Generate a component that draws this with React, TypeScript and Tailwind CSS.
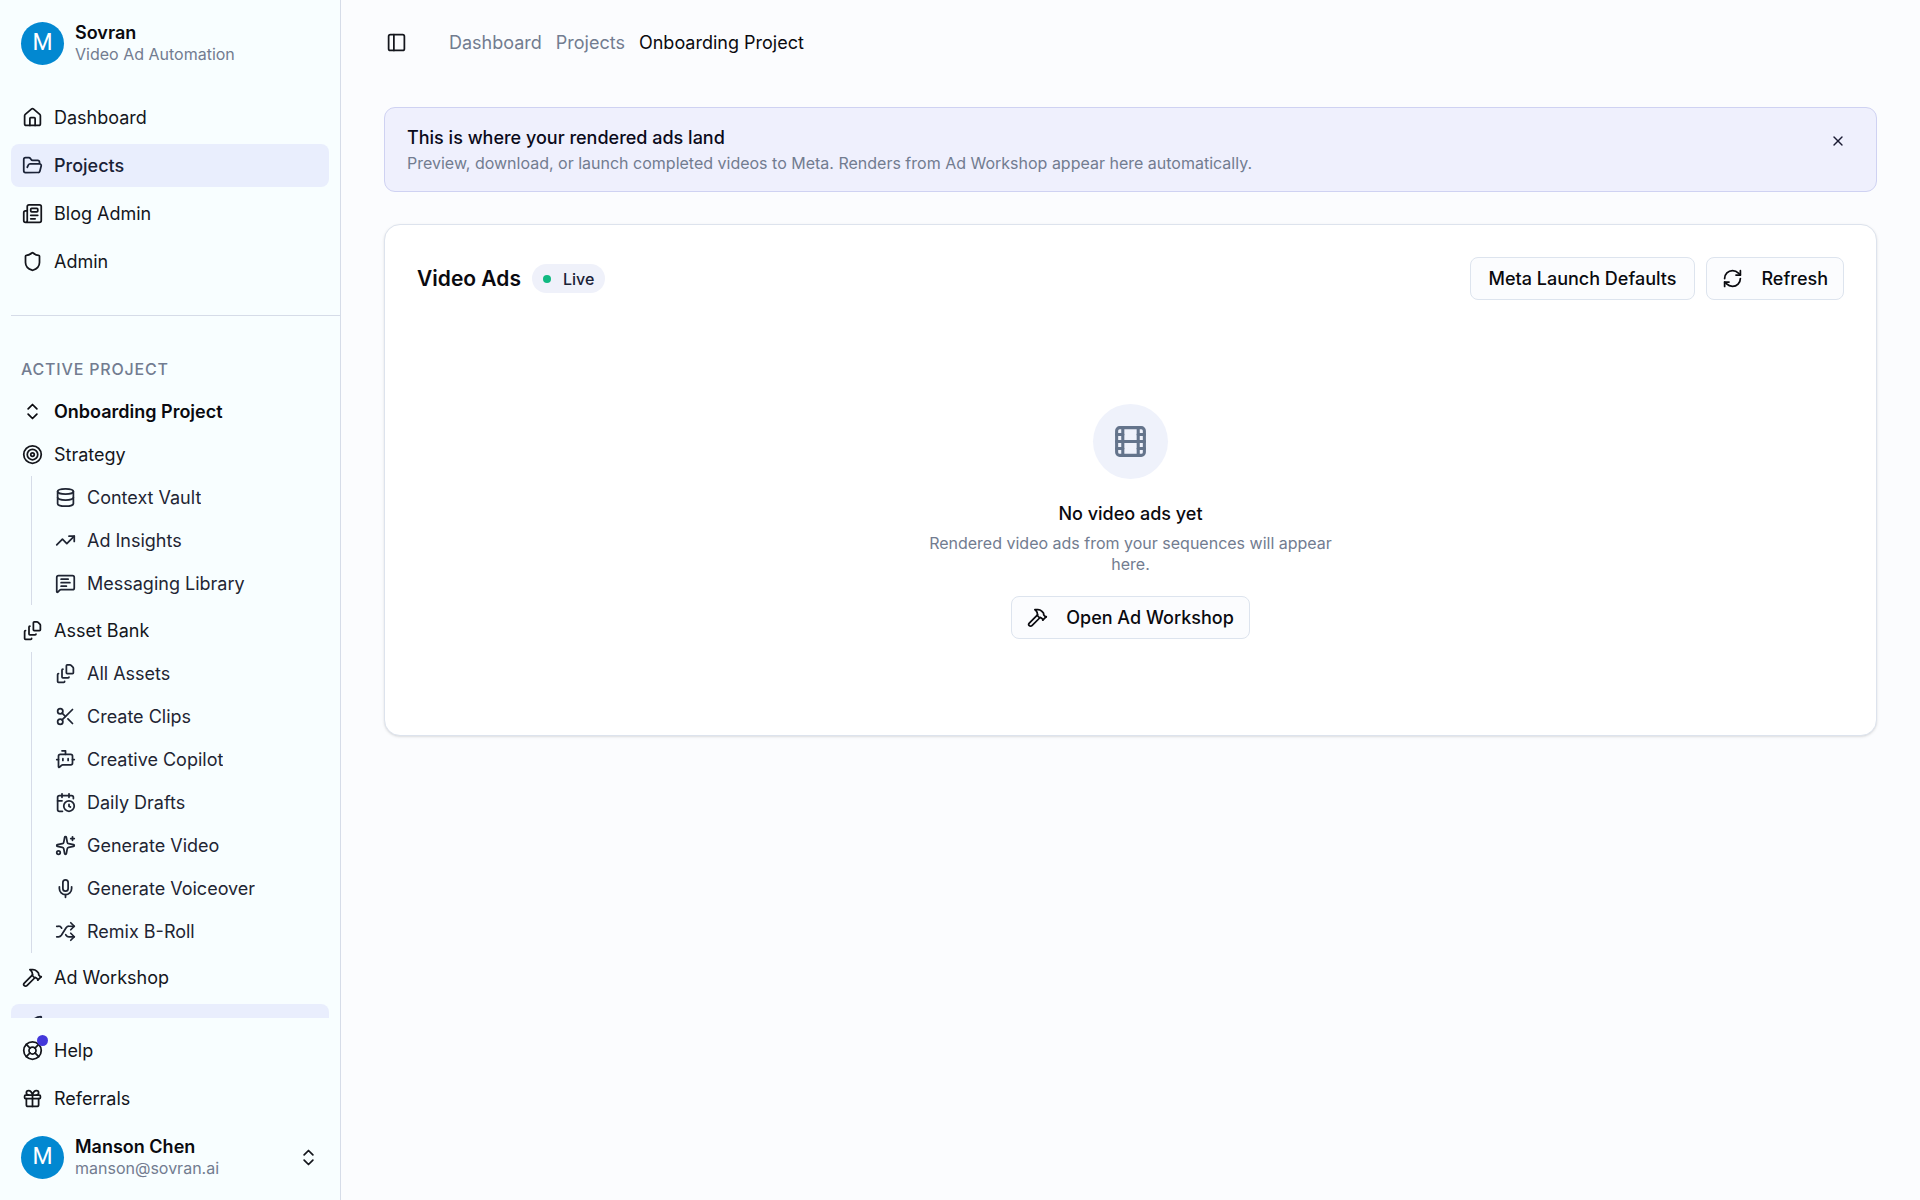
import type { ReactNode } from "react";
import {
  BotMessageSquare,
  CalendarClock,
  ChevronsUpDown,
  Database,
  FileStack,
  Film,
  FolderOpen,
  Gift,
  Hammer,
  House,
  LifeBuoy,
  MessageSquareText,
  Mic,
  Newspaper,
  PanelLeft,
  RefreshCw,
  Rocket,
  Scissors,
  Shield,
  Shuffle,
  Sparkles,
  Target,
  TrendingUp,
  X,
  type LucideIcon,
} from "lucide-react";

type Item = { label: string; icon: LucideIcon; active?: boolean };

const mainNav: Item[] = [
  { label: "Dashboard", icon: House },
  { label: "Projects", icon: FolderOpen, active: true },
  { label: "Blog Admin", icon: Newspaper },
  { label: "Admin", icon: Shield },
];

const strategy: Item[] = [
  { label: "Context Vault", icon: Database },
  { label: "Ad Insights", icon: TrendingUp },
  { label: "Messaging Library", icon: MessageSquareText },
];

const assets: Item[] = [
  { label: "All Assets", icon: FileStack },
  { label: "Create Clips", icon: Scissors },
  { label: "Creative Copilot", icon: BotMessageSquare },
  { label: "Daily Drafts", icon: CalendarClock },
  { label: "Generate Video", icon: Sparkles },
  { label: "Generate Voiceover", icon: Mic },
  { label: "Remix B-Roll", icon: Shuffle },
];

function NavLink({ item, children }: { item: Item; children?: ReactNode }) {
  const Icon = item.icon;
  return (
    <a
      href="#"
      className={
        item.active
          ? "flex h-[43px] items-center gap-[11px] rounded-lg bg-[#e9eefd] px-[11px] font-medium text-[#1a2236]"
          : "flex h-[43px] items-center gap-[11px] rounded-lg px-[11px]"
      }
    >
      <span className="relative shrink-0">
        <Icon size={21} />
        {children}
      </span>
      <span className="truncate">{item.label}</span>
    </a>
  );
}

function SubNav({ items }: { items: Item[] }) {
  return (
    <ul className="ml-5 border-l border-[#d6dce8] pl-3 text-[#1f2533]">
      {items.map((item) => (
        <li key={item.label}>
          <NavLink item={item} />
        </li>
      ))}
    </ul>
  );
}

function Avatar() {
  return (
    <span className="flex size-[43px] shrink-0 items-center justify-center rounded-full bg-[#0288d1] font-['Roboto',sans-serif] text-[23px] text-white">
      M
    </span>
  );
}

function Identity({ name, detail }: { name: string; detail: string }) {
  return (
    <span className="flex min-w-0 flex-1 flex-col text-left">
      <span className="truncate leading-[23px] font-semibold text-[#0a0a0f]">{name}</span>
      <span className="truncate text-base leading-[21px] text-[#727c90]">{detail}</span>
    </span>
  );
}

function OutlineButton({ icon: Icon, children }: { icon?: LucideIcon; children: ReactNode }) {
  return (
    <button
      type="button"
      className={
        Icon
          ? "flex h-[43px] items-center gap-[18px] rounded-lg border border-[#dde4ee] bg-[#fbfcfe] px-[15px] font-medium text-[#0a0a0f]"
          : "flex h-[43px] items-center rounded-lg border border-[#dde4ee] bg-[#fbfcfe] px-[18px] font-medium text-[#0a0a0f]"
      }
    >
      {Icon && <Icon size={21} />}
      {children}
    </button>
  );
}

export default function App() {
  return (
    <div className="flex h-screen bg-[#fbfcfe] font-['Inter',sans-serif] text-[18px] text-[#14161c]">
      <aside className="flex w-[341px] shrink-0 flex-col border-r border-[#d6dce8] bg-[#f8feff]">
        <div className="flex items-center gap-[11px] px-[21px] pt-[21px] pb-[31px]">
          <Avatar />
          <Identity name="Sovran" detail="Video Ad Automation" />
        </div>
        <div className="min-h-0 flex-1 overflow-hidden">
          <nav aria-label="Main" className="px-[11px]">
            <ul className="flex flex-col gap-[5px]">
              {mainNav.map((item) => (
                <li key={item.label}>
                  <NavLink item={item} />
                </li>
              ))}
            </ul>
          </nav>
          <hr className="mt-8 ml-[11px] border-[#d6dce8]" />
          <nav aria-label="Active project" className="px-[11px] pt-[31px]">
            <h2 className="flex h-[43px] items-center px-[10px] text-base font-medium tracking-wider text-[#727c90] uppercase">
              Active Project
            </h2>
            <button type="button" className="flex h-[43px] w-full items-center gap-[11px] px-[11px] font-semibold text-[#0a0a0f]">
              <ChevronsUpDown size={21} />
              Onboarding Project
            </button>
            <NavLink item={{ label: "Strategy", icon: Target }} />
            <SubNav items={strategy} />
            <div className="mt-1">
              <NavLink item={{ label: "Asset Bank", icon: FileStack }} />
            </div>
            <SubNav items={assets} />
            <div className="mt-[3px] flex flex-col gap-[5px]">
              <NavLink item={{ label: "Ad Workshop", icon: Hammer }} />
              <NavLink item={{ label: "Rendered Ads", icon: Rocket, active: true }} />
            </div>
          </nav>
        </div>
        <div className="flex flex-col gap-[5px] p-[11px]">
          <NavLink item={{ label: "Help", icon: LifeBuoy }}>
            <span className="absolute -top-[5px] -right-[5px] size-[11px] rounded-full bg-[#4338da]" />
          </NavLink>
          <NavLink item={{ label: "Referrals", icon: Gift }} />
          <button type="button" className="flex h-16 items-center gap-[11px] px-[10px]">
            <Avatar />
            <Identity name="Manson Chen" detail="manson@sovran.ai" />
            <ChevronsUpDown size={21} />
          </button>
        </div>
      </aside>

      <main className="flex min-w-0 flex-1 flex-col px-[43px]">
        <header className="flex h-[85px] items-center gap-[42px] pl-0.5">
          <button type="button" aria-label="Toggle sidebar">
            <PanelLeft size={21} />
          </button>
          <nav aria-label="Breadcrumb">
            <ol className="flex items-center gap-[14px] text-[#727c90]">
              <li><a href="#">Dashboard</a></li>
              <li><a href="#">Projects</a></li>
              <li className="text-[#0a0a0f]">Onboarding Project</li>
            </ol>
          </nav>
        </header>

        <section className="mt-[22px] flex items-start justify-between rounded-[11px] border border-[#cfd2f2] bg-[#eff0fd] px-[22px] pt-[17px] pb-4">
          <div>
            <h2 className="leading-[26px] font-medium text-[#0a0a1a]">This is where your rendered ads land</h2>
            <p className="text-base leading-6 text-[#727c90]">
              Preview, download, or launch completed videos to Meta. Renders from Ad Workshop appear here automatically.
            </p>
          </div>
          <button type="button" aria-label="Dismiss" className="flex size-8 items-center justify-center text-[#1a1a33]">
            <X size={16} />
          </button>
        </section>

        <section className="mt-8 rounded-2xl border border-[#dde3ed] bg-white px-8 pt-8 pb-24 shadow-sm">
          <div className="flex items-center justify-between">
            <div className="flex items-center gap-[11px]">
              <h1 className="text-[21px] font-semibold text-[#0a0a0f]">Video Ads</h1>
              <span className="flex h-[29px] items-center gap-3 rounded-full bg-[#eff1fa] px-[11px] text-base font-medium text-[#1a2236]">
                <span className="size-2 rounded-full bg-[#10b981]" />
                Live
              </span>
            </div>
            <div className="flex gap-[11px]">
              <OutlineButton>Meta Launch Defaults</OutlineButton>
              <OutlineButton icon={RefreshCw}>Refresh</OutlineButton>
            </div>
          </div>
          <div className="mt-[104px] flex flex-col items-center text-center">
            <div className="flex size-[75px] items-center justify-center rounded-full bg-[#eff2fb] text-[#64748b]">
              <Film size={37} />
            </div>
            <h2 className="mt-[21px] leading-7 font-medium text-[#0a0a0f]">No video ads yet</h2>
            <p className="mt-[5px] max-w-[427px] text-base leading-[21px] text-[#727c90]">
              Rendered video ads from your sequences will appear here.
            </p>
            <div className="mt-[21px]">
              <OutlineButton icon={Hammer}>Open Ad Workshop</OutlineButton>
            </div>
          </div>
        </section>
      </main>
    </div>
  );
}
